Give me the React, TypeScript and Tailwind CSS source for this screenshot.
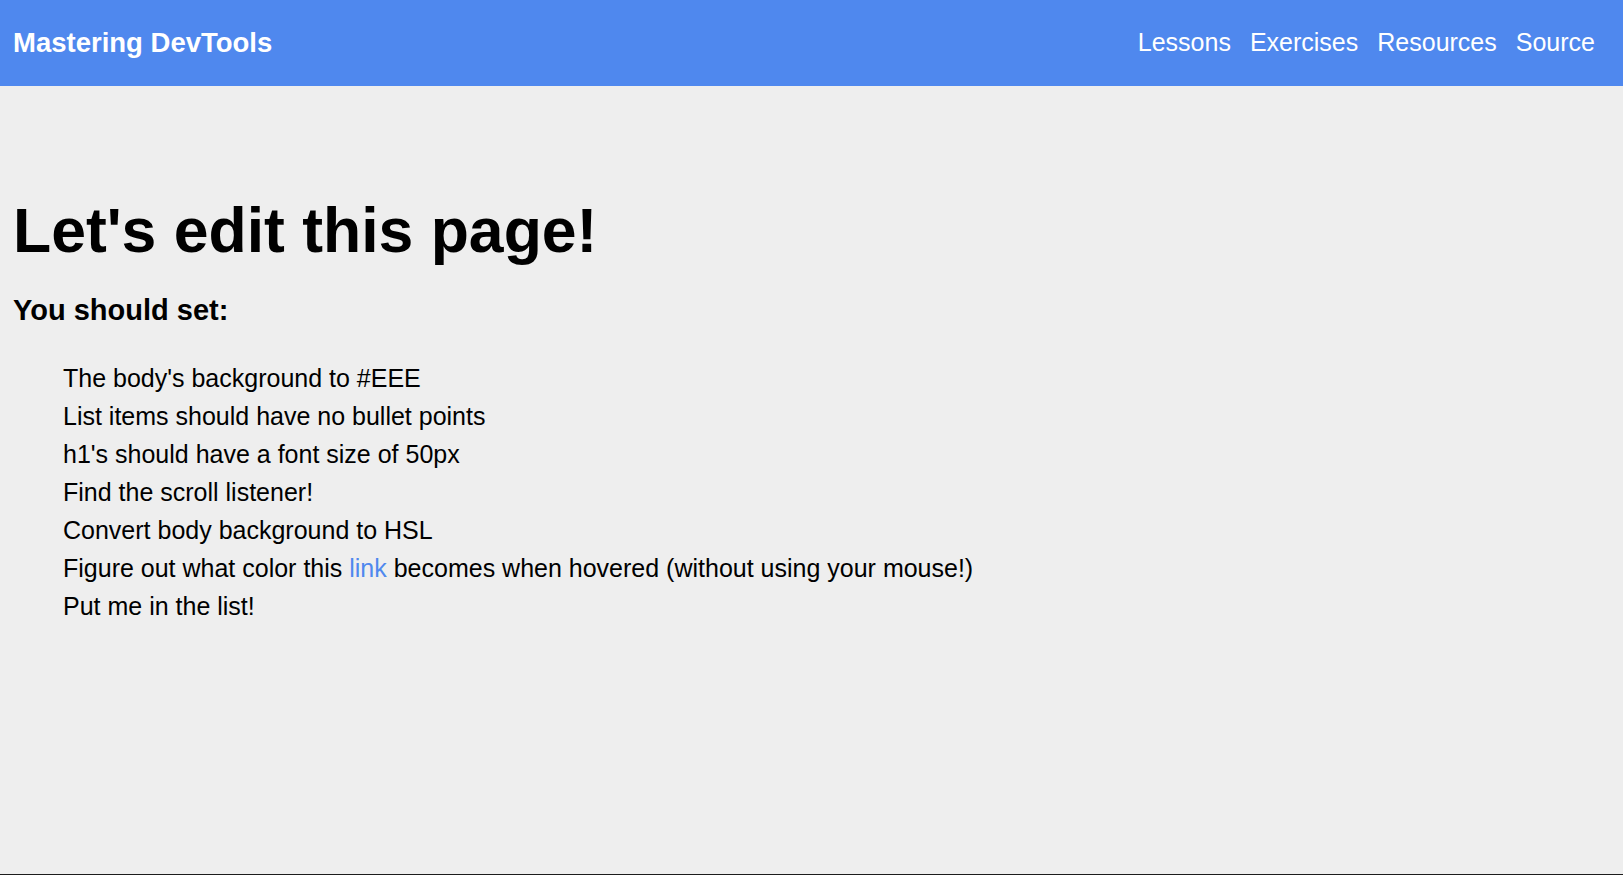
import React from "react";

export default function App() {
  const items: React.ReactNode[] = [
    "The body's background to #EEE",
    "List items should have no bullet points",
    "h1's should have a font size of 50px",
    "Find the scroll listener!",
    "Convert body background to HSL",
    <>
      Figure out what color this{" "}
      <a href="#" className="text-[#4f88ee]">
        link
      </a>{" "}
      becomes when hovered (without using your mouse!)
    </>,
    "Put me in the list!",
  ];
  return (
    <div
      className="h-[875px] flex flex-col bg-[#eeeeee] text-black"
      style={{ fontFamily: '"Liberation Sans", Arial, sans-serif' }}
    >
      <header className="h-[86px] shrink-0 bg-[#4f88ee] flex items-center justify-between pl-[13px] pr-[28px] text-white">
        <div className="text-[27.5px] font-bold">Mastering DevTools</div>
        <nav className="flex gap-[19px] text-[25px]">
          <a href="#">Lessons</a>
          <a href="#">Exercises</a>
          <a href="#">Resources</a>
          <a href="#">Source</a>
        </nav>
      </header>
      <main className="pl-[13px] pt-[108px]">
        <h1 className="text-[62.5px] font-bold leading-[72px]">Let's edit this page!</h1>
        <h2 className="mt-[27px] text-[29px] font-bold leading-[34px]">You should set:</h2>
        <ul className="mt-[32px] pl-[50px] text-[25px] leading-[38px]">
          {items.map((it, i) => (
            <li key={i}>{it}</li>
          ))}
        </ul>
      </main>
      <div className="mt-auto h-px bg-[#1c1c1c]" />
    </div>
  );
}
